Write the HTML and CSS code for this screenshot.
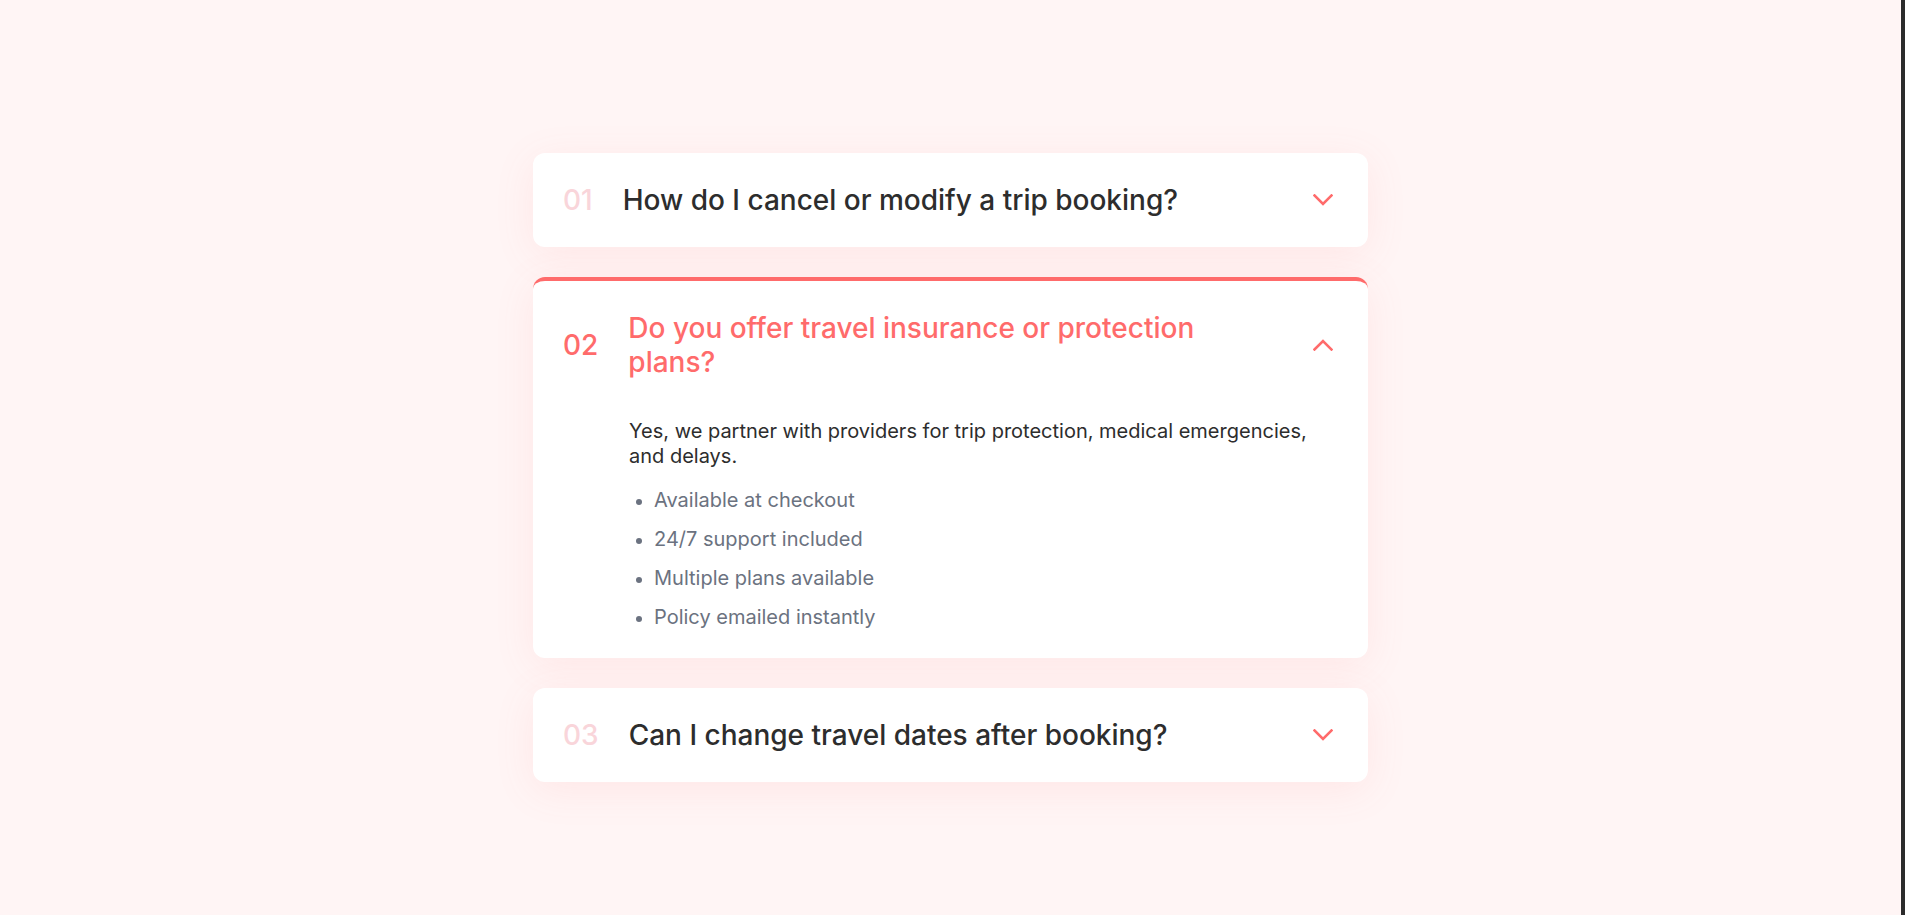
FILE: index.html
```html
<!DOCTYPE html>
<html lang="en">
<head>
<meta charset="utf-8">
<title>FAQ</title>
<link rel="stylesheet" href="styles.css">
</head>
<body>
<div class="page">
  <main class="main">
    <section class="faq">
      <div class="item">
        <div class="head">
          <span class="num">01</span>
          <span class="q">How do I cancel or modify a trip booking?</span>
          <svg class="chev" viewBox="0 0 20 12" width="20" height="12"><polyline points="1.5,1.5 10,10 18.5,1.5"/></svg>
        </div>
      </div>
      <div class="item open">
        <div class="head">
          <span class="num">02</span>
          <span class="q">Do you offer travel insurance or protection plans?</span>
          <svg class="chev" viewBox="0 0 20 12" width="20" height="12"><polyline points="1.5,10.5 10,2 18.5,10.5"/></svg>
        </div>
        <div class="answer">
          <p>Yes, we partner with providers for trip protection, medical emergencies, and delays.</p>
          <ul>
            <li>Available at checkout</li>
            <li>24/7 support included</li>
            <li>Multiple plans available</li>
            <li>Policy emailed instantly</li>
          </ul>
        </div>
      </div>
      <div class="item">
        <div class="head">
          <span class="num">03</span>
          <span class="q">Can I change travel dates after booking?</span>
          <svg class="chev" viewBox="0 0 20 12" width="20" height="12"><polyline points="1.5,1.5 10,10 18.5,1.5"/></svg>
        </div>
      </div>
    </section>
  </main>
  <div class="edge"></div>
</div>
</body>
</html>
```
FILE: styles.css
```css
* { box-sizing: border-box; }
html, body { margin: 0; padding: 0; height: 100%; }
body {
  font-family: Inter, "Noto Sans", sans-serif;
  background: #fff5f5;
  color: #2d2d2d;
}
.page { display: flex; height: 100%; }
.main { flex: 1; display: flex; justify-content: center; padding-top: 153px; }
.edge { width: 4px; background: #2b2b2b; }
.faq { width: 835px; display: flex; flex-direction: column; gap: 30px; }
.item {
  background: #fff;
  border-radius: 12px;
  box-shadow: 0 8px 40px rgba(255, 107, 107, 0.10);
}
.item.open { border-top: 4px solid #ff6b6b; }
.head {
  display: flex;
  align-items: center;
  padding: 30px 35px 30px 30px;
}
.num {
  font-size: 28px;
  font-weight: 500;
  color: #f9d5da;
  line-height: 34px;
  margin-right: 30px;
}
.q {
  flex: 1;
  font-size: 28px;
  font-weight: 500;
  line-height: 34px;
  color: #2d2d2d;
  padding-right: 80px;
}
.open .num, .open .q { color: #ff6b6b; }
.chev { fill: none; stroke: #ff6b6b; stroke-width: 2.6; stroke-linecap: square; flex: none; }
.answer { padding: 10px 35px 22px 96px; }
.answer p { margin: 0 0 11px; font-size: 20px; line-height: 25px; color: #2d2d2d; }
.answer ul { margin: 0; padding-left: 25px; color: #6b7280; font-size: 20px; }
.answer li { line-height: 24px; padding: 7.5px 0; }
.answer li::marker { font-size: 18px; }
```
